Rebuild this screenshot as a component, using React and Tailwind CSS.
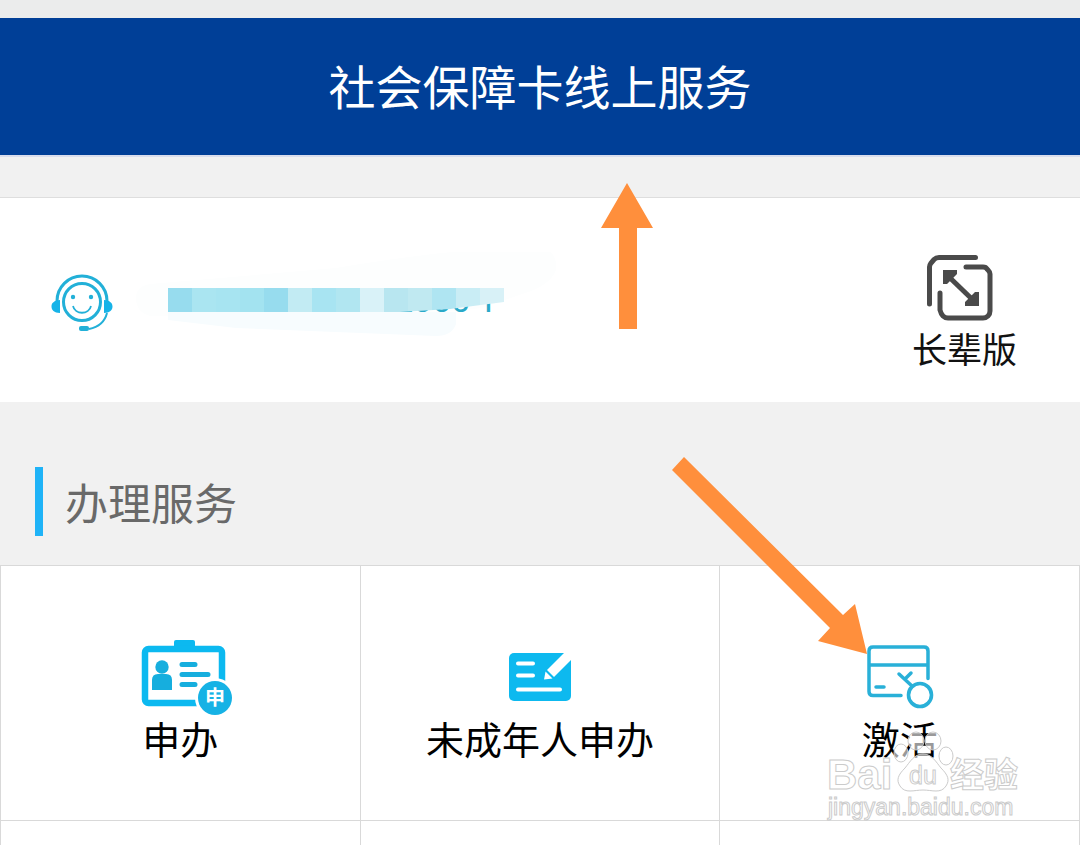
import React from "react";

const mosaico = [
  "#97dcee", "#aae5f1", "#a7e4f1", "#a3e3f0", "#97dcee", "#c2ebf3", "#a8e4f2",
  "#b1e6f1", "#d9f2f8", "#b8e6f0", "#c0e9f1", "#afe5f2", "#c9edf5", "#d8f1f7",
];

function HeadsetIcon() {
  return (
    <svg width="64" height="62" viewBox="0 0 64 62" fill="none" stroke="#22b0d8" aria-hidden="true">
      <circle cx="32" cy="30" r="18.500" strokeWidth="3" />
      <path d="M7 29a25 25 0 0 1 50 0" strokeWidth="3" />
      <path d="M10 28v13C4 41 1.500 38 1.500 34.500S4 28.500 10 28zM54 28v13c6 0 8.500-3 8.500-6.500S60 28.500 54 28z" fill="#16b3e8" stroke="none" />
      <path d="M57 41c-2 8-8 14-18 16" strokeWidth="2" />
      <rect x="29" y="54" width="10" height="5" rx="2" fill="#22b0d8" stroke="none" />
      <circle cx="23" cy="25" r="2.200" fill="#22b0d8" stroke="none" />
      <circle cx="41" cy="25" r="2.200" fill="#22b0d8" stroke="none" />
      <path d="M23 34c2 9 16 9 18 0" strokeWidth="1.800" />
    </svg>
  );
}

function ElderIcon() {
  return (
    <svg width="68" height="68" viewBox="0 0 68 68" fill="none" stroke="#4a4a4a" strokeWidth="5" strokeLinecap="round" className="mr-2" aria-hidden="true">
      <path d="M49.500 3.500H13q-3 0-5 2L5 9q-1.500 2-1.500 4v37" />
      <path d="M40 13h17q3 0 4 2l1 1q2 2 2 4v37q0 3-2 5t-5 2H22q-3 0-5-2t-3-6V39" />
      <path d="M21 21l28 27" strokeLinecap="butt" />
      <path d="M17 16h14v4L21 30h-4zM53 52H39v-4l10-10h4z" fill="#4a4a4a" stroke="none" />
    </svg>
  );
}

function ApplyIcon() {
  return (
    <svg width="104" height="78" viewBox="0 0 104 78" fill="none" stroke="#0cb9f0" aria-hidden="true">
      <path d="M46 9V4q0-2 2-2h17q2 0 2 2v5z" fill="#0cb9f0" stroke="none" />
      <rect x="17" y="11" width="77" height="54" rx="3.500" strokeWidth="6.500" />
      <circle cx="34" cy="29" r="6.700" fill="#16aede" stroke="none" />
      <path d="M24 52V42q0-6 6-6h8q6 0 6 6v10z" fill="#16aede" stroke="none" />
      <path d="M54 26.500h13M54 36.500h26M54 46.500h13" stroke="#16aede" strokeWidth="5" strokeLinecap="round" />
      <circle cx="87" cy="60" r="20" fill="#fff" stroke="none" />
      <circle cx="87" cy="60" r="17" fill="#16b2e5" stroke="none" />
      <text x="87" y="67" textAnchor="middle" fontSize="20" fontWeight="700" fill="#fff" stroke="none">申</text>
    </svg>
  );
}

function MinorIcon() {
  return (
    <svg width="62" height="48" viewBox="0 0 62 48" fill="none" aria-hidden="true">
      <rect width="62" height="48" rx="5" fill="#0db9ef" />
      <path d="M9 10.500h15M9 22.500h15M9 36.500h42" stroke="#fff" strokeWidth="4" strokeLinecap="round" />
      <path d="M38 17L56-1h6v8L45 24z" fill="#fff" />
      <path d="M36.500 18.500l7 7-8.500 1z" fill="#fff" />
    </svg>
  );
}

function ActivateIcon() {
  return (
    <svg width="68" height="64" viewBox="0 0 68 64" fill="none" stroke="#29b0d8" strokeWidth="3.500" strokeLinecap="round" aria-hidden="true">
      <path d="M35 50.500H7q-4 0-4-4V6q0-4 4-4h51q4 0 4 4v27.500M3 20h59" />
      <path d="M10 42h8M46 41L33 29M39 34l6-6" />
      <circle cx="54" cy="50" r="11.500" strokeWidth="3.600" />
    </svg>
  );
}

function Watermark() {
  return (
    <svg
      width="200"
      height="94"
      viewBox="0 0 200 94"
      fill="#fff"
      fillOpacity="0.6"
      stroke="#cbcbcb"
      className="pointer-events-none absolute left-[106px] top-[162px]"
      aria-hidden="true"
    >
      <text x="1" y="61" fontSize="42" fontWeight="700" fontFamily="Liberation Sans">Bai</text>
      <ellipse cx="75" cy="25" rx="7" ry="9" />
      <ellipse cx="90" cy="13" rx="8" ry="9" />
      <ellipse cx="107" cy="13" rx="8" ry="9" />
      <ellipse cx="120" cy="28" rx="7" ry="9" />
      <path d="M97 26c9 0 13 8 18 14 7 7 9 12 5 18-5 8-14 4-23 4s-18 4-23-4c-4-6-2-11 5-18 5-6 9-14 18-14z" />
      <text x="83" y="56" fontSize="25" fontFamily="Liberation Sans">du</text>
      <text x="124" y="59" fontSize="34" fontWeight="700">经验</text>
      <text x="2" y="87" fontSize="23" fontFamily="Liberation Sans">jingyan.baidu.com</text>
    </svg>
  );
}

const servicos = [
  { nome: "申办", icone: <ApplyIcon /> },
  { nome: "未成年人申办", icone: <MinorIcon /> },
  { nome: "激活", icone: <ActivateIcon />, destaque: true },
];

export default function App() {
  return (
    <div className="min-h-screen overflow-hidden bg-[#f1f1f1] pt-[18px] font-['Noto_Sans_CJK_SC',sans-serif]">
      <header className="border-b-2 border-[#d9dded] bg-[#003f97] pb-[34px] pt-[30px] text-center text-white shadow-[0_-18px_0_#ebecec]">
        <h1 className="text-[47px] leading-[73px]">社会保障卡线上服务</h1>
      </header>

      {/* usuário */}
      <section className="relative mt-10 flex items-start justify-between border-t border-[#dedede] bg-white pb-[42px] pl-[50px] pr-[63px] pt-[56px]">
        <div className="flex items-start pt-[18px]">
          <HeadsetIcon />
          <div className="relative ml-[54px] mt-4 h-12 w-[350px]">
            <svg width="430" height="100" viewBox="0 0 430 100" className="absolute -left-8 -top-9" aria-hidden="true">
              <path d="M0 46Q0 34 14 32L200 16Q330-6 406-4q16 4 14 22-6 16-34 24l-40 14-100 10-232-2Q0 60 0 46z" fill="#fdfefe" />
              <path d="M32 60h288v12q-4 12-20 12L100 76 32 68z" fill="#f7fcfe" />
            </svg>
            <span className="absolute -top-2 left-[226px] font-[Roboto] text-[34px] leading-10 text-[#2aa9c8]">2000 T</span>
            <svg width="400" height="86" viewBox="0 0 400 86" className="absolute -left-8 -top-9" aria-hidden="true">
              <clipPath id="faixa">
                <path d="M32 36h336v14l-54 7-50 3H32z" />
              </clipPath>
              <g clipPath="url(#faixa)">
                {mosaico.map((cor, i) => (
                  <rect key={i} x={32 + i * 24} y="36" width="24" height="24" fill={cor} />
                ))}
              </g>
            </svg>
          </div>
        </div>
        <button type="button" className="flex flex-col items-center">
          <ElderIcon />
          <span className="pt-[14px] text-[35px] leading-6 text-[#111]">长辈版</span>
        </button>
        <svg width="52" height="147" viewBox="0 0 52 147" className="absolute left-1/2 -top-[15px] ml-[61px]" aria-hidden="true">
          <path d="M26 0l26 45H36v101H18V45H0z" fill="#ff8f3c" />
        </svg>
      </section>

      <div className="flex items-center px-[35px] pb-[29px] pt-[65px]">
        <h2 className="border-l-8 border-[#1fb3f7] pl-[22px] text-[43px] leading-[69px] text-[#696969]">办理服务</h2>
      </div>

      <section className="grid grid-cols-3 border-l border-t border-[#d9d9d9] bg-white">
        {servicos.map((s) => (
          <div key={s.nome} className="relative border-b border-r border-[#d9d9d9]">
            <button type="button" className="flex w-full flex-col items-center pb-[60px] pt-[72px]">
              <span className="relative flex h-[78px] items-center">
                {s.icone}
                {s.destaque && (
                  <svg width="196" height="198" viewBox="0 0 196 198" className="absolute bottom-[61px] right-full max-w-none overflow-visible" aria-hidden="true">
                    <path d="M14 0l159 158 12-11 12 50-49-13 12-13L2 13z" fill="#ff8f3c" />
                  </svg>
                )}
              </span>
              <span className="text-[38px] leading-[44px] text-black">{s.nome}</span>
            </button>
            {s.destaque && <Watermark />}
          </div>
        ))}
        <div className="h-6 border-r border-[#d9d9d9]" />
        <div className="h-6 border-r border-[#d9d9d9]" />
        <div className="h-6 border-r border-[#d9d9d9]" />
      </section>
    </div>
  );
}
